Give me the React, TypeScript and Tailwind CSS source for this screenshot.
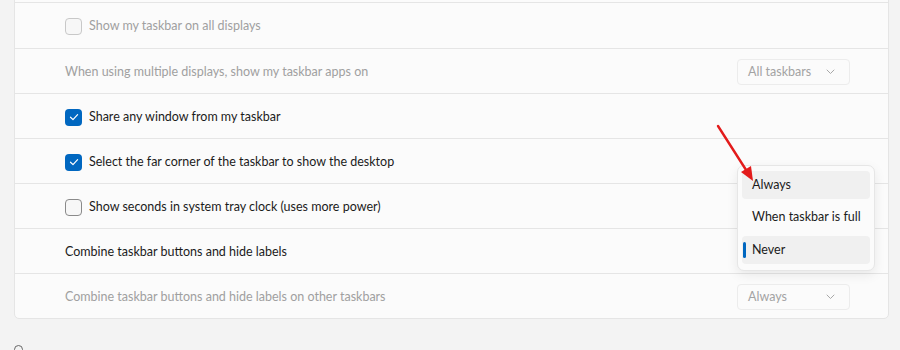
import React from 'react';

type Row = {
  label: string;
  check?: 'on' | 'off';
  disabled?: boolean;
  select?: string;
};

const rows: Row[] = [
  { label: 'Show my taskbar on all displays', check: 'off', disabled: true },
  { label: 'When using multiple displays, show my taskbar apps on', disabled: true, select: 'All taskbars' },
  { label: 'Share any window from my taskbar', check: 'on' },
  { label: 'Select the far corner of the taskbar to show the desktop', check: 'on' },
  { label: 'Show seconds in system tray clock (uses more power)', check: 'off' },
  { label: 'Combine taskbar buttons and hide labels' },
  { label: 'Combine taskbar buttons and hide labels on other taskbars', disabled: true, select: 'Always' },
];

function Checkbox({ on, disabled }: { on: boolean; disabled?: boolean }) {
  if (on) {
    return (
      <div className="w-[17px] h-[17px] rounded-[4px] bg-[#0067c0] flex items-center justify-center shrink-0">
        <svg width="10" height="10" viewBox="0 0 10 10" fill="none">
          <path d="M1.5 5.2 L4 7.6 L8.6 2.6" stroke="white" strokeWidth="1.2" strokeLinecap="round" strokeLinejoin="round" />
        </svg>
      </div>
    );
  }
  return (
    <div
      className={`w-[17px] h-[17px] rounded-[4px] border shrink-0 bg-[#f7f7f7] ${
        disabled ? 'border-[#c8c8c8]' : 'border-[#8a8a8a]'
      }`}
    />
  );
}

function Select({ value }: { value: string }) {
  return (
    <div className="w-[113px] h-[26px] rounded-[4px] border border-[#ececec] bg-[#fbfbfb] flex items-center justify-between pl-[10px] pr-[14px] text-[12.5px] text-[#a3a3a3]">
      <span>{value}</span>
      <svg width="9" height="6" viewBox="0 0 9 6" fill="none">
        <path d="M1 1 L4.5 4.5 L8 1" stroke="#a8a8a8" strokeWidth="1" strokeLinecap="round" strokeLinejoin="round" />
      </svg>
    </div>
  );
}

export default function App() {
  return (
    <div
      className="w-[900px] h-[350px] bg-[#f3f3f3] relative overflow-hidden"
      style={{ fontFamily: 'Lato, "Noto Sans", sans-serif' }}
    >
      {/* Settings card */}
      <div className="ml-[14px] mr-[11px] -mt-[4px] bg-[#fbfbfb] border border-[#e5e5e5] rounded-b-[5px] pt-[5px]">
        <div className="border-t border-[#e5e5e5]">
          {rows.map((r, i) => (
            <div
              key={i}
              className={`h-[45px] flex items-center justify-between pl-[50px] pr-[38px] pt-[2px] ${
                i > 0 ? 'border-t border-[#e5e5e5]' : ''
              }`}
            >
              <div className="flex items-center gap-[7px]">
                {r.check && <Checkbox on={r.check === 'on'} disabled={r.disabled} />}
                <span className={`text-[12.5px] ${r.disabled ? 'text-[#a0a0a0]' : 'text-[#1b1b1b]'}`}>
                  {r.label}
                </span>
              </div>
              {r.select && <Select value={r.select} />}
            </div>
          ))}
        </div>
      </div>

      {/* Small cut-off icon at bottom */}
      <div className="absolute left-[14px] top-[345px] w-[9px] h-[9px] rounded-full border border-[#666]" />

      {/* Open dropdown menu */}
      <div className="absolute left-[737px] top-[165px] w-[138px] bg-[#fbfbfb] border border-[#e6e6e6] rounded-[7px] shadow-[0_4px_12px_rgba(0,0,0,0.08)] px-[4px] pt-[5px] pb-[6px] flex flex-col gap-[4.5px] text-[12.5px] text-[#1b1b1b] whitespace-nowrap">
        <div className="h-[28px] rounded-[4px] bg-[#f0f0f0] flex items-center pl-[10px]">Always</div>
        <div className="h-[28px] rounded-[4px] flex items-center pl-[10px]">When taskbar is full</div>
        <div className="h-[28px] rounded-[4px] bg-[#f0f0f0] flex items-center pl-[10px] relative">
          <div className="absolute left-[1px] top-[6px] w-[3px] h-[16px] rounded-full bg-[#0067c0]" />
          Never
        </div>
      </div>

      {/* Red annotation arrow */}
      <svg className="absolute left-0 top-0 pointer-events-none" width="900" height="350">
        <line x1="718" y1="126" x2="748" y2="173" stroke="#e31b1b" strokeWidth="2.4" strokeLinecap="round" />
        <polygon points="753,181 741,172 751,166" fill="#e31b1b" />
      </svg>
    </div>
  );
}
